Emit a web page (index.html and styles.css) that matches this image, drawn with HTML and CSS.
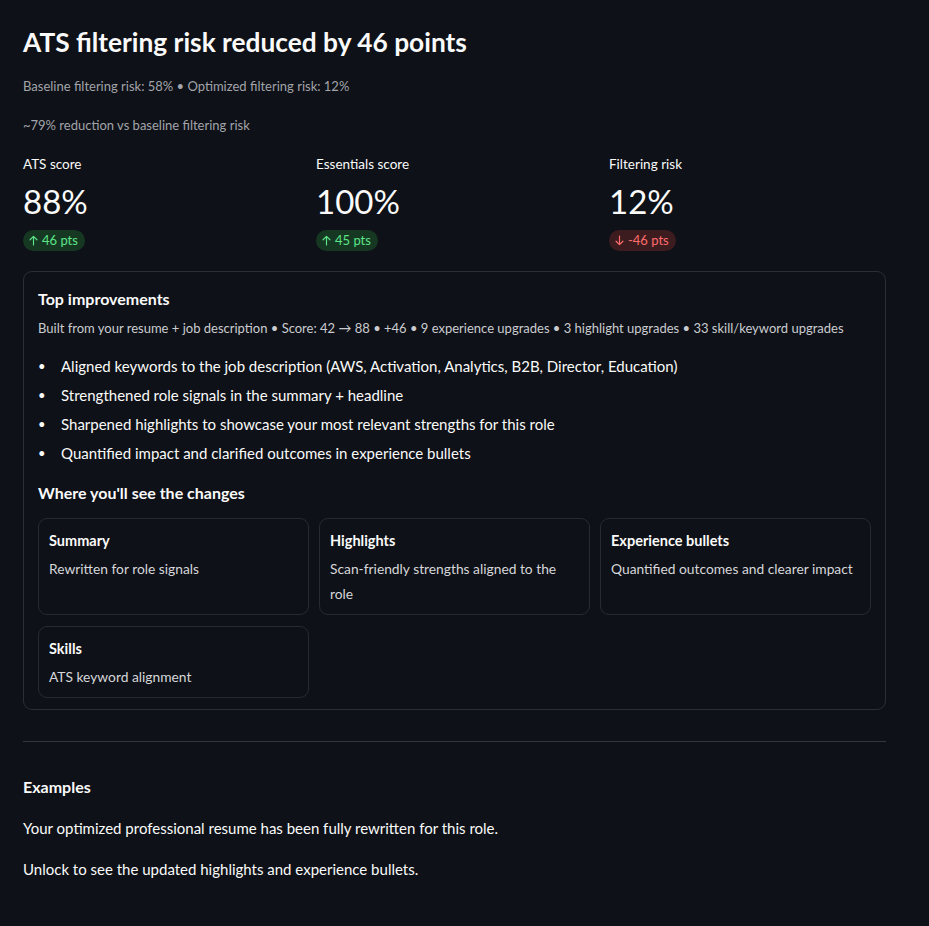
FILE: index.html
```html
<!DOCTYPE html>
<html lang="en">
<head>
<meta charset="utf-8">
<title>ATS summary</title>
<link rel="stylesheet" href="styles.css">
</head>
<body>
<main class="page">
  <h1 class="title">ATS filtering risk reduced by 46 points</h1>
  <p class="caption cap-first">Baseline filtering risk: 58% • Optimized filtering risk: 12%</p>
  <p class="caption cap-second">~79% reduction vs baseline filtering risk</p>

  <section class="metrics">
    <div class="metric">
      <div class="metric-label">ATS score</div>
      <div class="metric-value">88%</div>
      <span class="delta up">
        <svg class="arrow" viewBox="0 0 10 12" width="9" height="11"><path d="M5 11V1.5M1.2 5.2L5 1.4l3.8 3.8" fill="none" stroke="currentColor" stroke-width="1.3" stroke-linecap="round" stroke-linejoin="round"/></svg>
        46 pts
      </span>
    </div>
    <div class="metric">
      <div class="metric-label">Essentials score</div>
      <div class="metric-value">100%</div>
      <span class="delta up">
        <svg class="arrow" viewBox="0 0 10 12" width="9" height="11"><path d="M5 11V1.5M1.2 5.2L5 1.4l3.8 3.8" fill="none" stroke="currentColor" stroke-width="1.3" stroke-linecap="round" stroke-linejoin="round"/></svg>
        45 pts
      </span>
    </div>
    <div class="metric">
      <div class="metric-label">Filtering risk</div>
      <div class="metric-value">12%</div>
      <span class="delta down">
        <svg class="arrow" viewBox="0 0 10 12" width="9" height="11"><path d="M5 1v9.5M1.2 6.8L5 10.6l3.8-3.8" fill="none" stroke="currentColor" stroke-width="1.3" stroke-linecap="round" stroke-linejoin="round"/></svg>
        -46 pts
      </span>
    </div>
  </section>

  <section class="panel">
    <h2 class="panel-title">Top improvements</h2>
    <p class="panel-caption">Built from your resume + job description • Score: 42 → 88 • +46 • 9 experience upgrades • 3 highlight upgrades • 33 skill/keyword upgrades</p>
    <ul class="bullets">
      <li>Aligned keywords to the job description (AWS, Activation, Analytics, B2B, Director, Education)</li>
      <li>Strengthened role signals in the summary + headline</li>
      <li>Sharpened highlights to showcase your most relevant strengths for this role</li>
      <li>Quantified impact and clarified outcomes in experience bullets</li>
    </ul>
    <h3 class="sub-title">Where you'll see the changes</h3>
    <div class="change-grid">
      <div class="change-card">
        <div class="change-title">Summary</div>
        <div class="change-desc">Rewritten for role signals</div>
      </div>
      <div class="change-card">
        <div class="change-title">Highlights</div>
        <div class="change-desc">Scan-friendly strengths aligned to the role</div>
      </div>
      <div class="change-card">
        <div class="change-title">Experience bullets</div>
        <div class="change-desc">Quantified outcomes and clearer impact</div>
      </div>
      <div class="change-card">
        <div class="change-title">Skills</div>
        <div class="change-desc">ATS keyword alignment</div>
      </div>
    </div>
  </section>

  <hr class="divider">

  <section class="examples">
    <h3 class="examples-title">Examples</h3>
    <p class="para">Your optimized professional resume has been fully rewritten for this role.</p>
    <p class="para">Unlock to see the updated highlights and experience bullets.</p>
  </section>
</main>
</body>
</html>
```

FILE: styles.css
```css
* { box-sizing: border-box; }

html, body {
  margin: 0;
  padding: 0;
  background: #0e1117;
}

body {
  font-family: Lato, "Noto Sans", "DejaVu Sans", sans-serif;
  color: #fafafa;
  font-size: 15px;
}

.page {
  width: 863px;
  margin-left: 23px;
  padding-top: 25px;
  padding-bottom: 40px;
}

.title {
  margin: 0;
  font-size: 26.3px;
  line-height: 34px;
  font-weight: 700;
}

.caption {
  margin: 0;
  font-size: 13px;
  line-height: 21px;
  color: #a2a4aa;
}

.cap-first { margin-top: 17px; }
.cap-second { margin-top: 18px; }

.metrics {
  display: grid;
  grid-template-columns: repeat(3, 1fr);
  column-gap: 16px;
  margin-top: 18px;
}

.metric {
  display: flex;
  flex-direction: column;
  align-items: flex-start;
}

.metric-label {
  font-size: 13.5px;
  line-height: 21px;
}

.metric-value {
  margin-top: 5px;
  font-size: 33px;
  line-height: 43px;
  font-weight: 400;
}

.delta {
  margin-top: 7px;
  display: inline-flex;
  align-items: center;
  gap: 4px;
  height: 21px;
  padding: 0 7px 0 6px;
  border-radius: 11px;
  font-size: 13px;
  line-height: 21px;
}

.delta.up {
  background: #163823;
  color: #5ce488;
}

.delta.down {
  background: #3d1c20;
  color: #ff6c6c;
}

.arrow { display: block; }

.panel {
  margin-top: 20px;
  border: 1px solid #2b2e36;
  border-radius: 9px;
  padding: 15px 14px 11px 14px;
}

.panel-title {
  margin: 0;
  font-size: 16px;
  line-height: 24px;
  font-weight: 700;
}

.panel-caption {
  margin: 7px 0 0 0;
  font-size: 13px;
  line-height: 21px;
  color: #cbccd0;
  white-space: nowrap;
}

.bullets {
  margin: 14px 0 0 0;
  padding: 0;
  list-style: none;
}

.bullets li {
  display: flex;
  font-size: 15px;
  line-height: 26px;
  margin-bottom: 3px;
}

.bullets li::before {
  content: "•";
  flex: 0 0 23px;
  font-size: 13px;
}

.sub-title {
  margin: 15px 0 0 0;
  font-size: 16px;
  line-height: 24px;
  font-weight: 700;
}

.change-grid {
  margin-top: 13px;
  display: grid;
  grid-template-columns: repeat(3, 1fr);
  gap: 11px 10px;
}

.change-card {
  border: 1px solid #272a31;
  border-radius: 9px;
  padding: 11px 10px 8px 10px;
}

.change-title {
  font-size: 14.5px;
  line-height: 21px;
  font-weight: 700;
}

.change-desc {
  margin-top: 5px;
  font-size: 13.8px;
  line-height: 25px;
  color: #d6d7da;
}

.divider {
  margin: 31px 0 0 0;
  border: 0;
  height: 1px;
  background: #34363e;
}

.examples-title {
  margin: 33px 0 0 0;
  font-size: 16px;
  line-height: 24px;
  font-weight: 700;
}

.para {
  margin: 17px 0 0 0;
  font-size: 15px;
  line-height: 24px;
}
```
